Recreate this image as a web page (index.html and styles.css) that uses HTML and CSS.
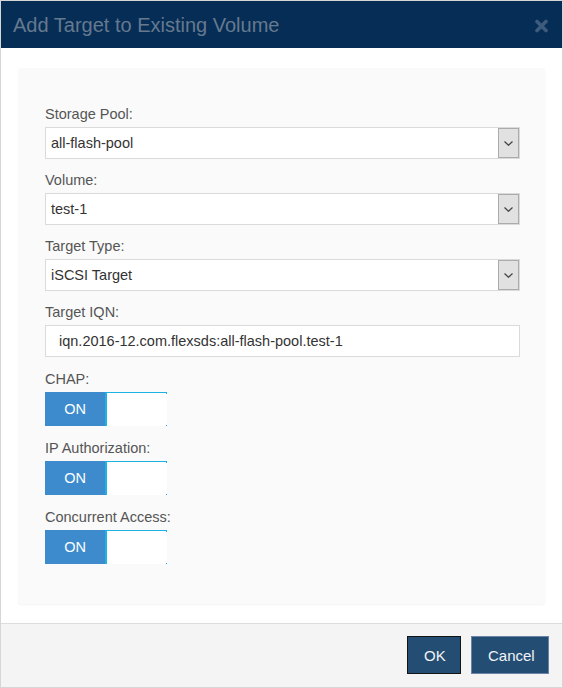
FILE: index.html
```html
<!DOCTYPE html>
<html>
<head>
<meta charset="utf-8">
<link rel="stylesheet" href="styles.css">
</head>
<body>
<div class="dialog">
  <div class="header">
    <div class="title">Add Target to Existing Volume</div>
    <svg class="close" width="13" height="14" viewBox="0 0 13 14"><path d="M2 2.5 L11 11.5 M11 2.5 L2 11.5" stroke="#3e5b7d" stroke-width="3.6" stroke-linecap="round"/></svg>
  </div>
  <div class="body">
    <div class="panel">
      <div class="field">
        <div class="label">Storage Pool:</div>
        <div class="select"><span class="value">all-flash-pool</span><span class="arrow"><svg width="9" height="5" viewBox="0 0 9 5"><path d="M0.5 0.5 L4.5 4.3 L8.5 0.5" fill="none" stroke="#444" stroke-width="1.2"/></svg></span></div>
      </div>
      <div class="field">
        <div class="label">Volume:</div>
        <div class="select"><span class="value">test-1</span><span class="arrow"><svg width="9" height="5" viewBox="0 0 9 5"><path d="M0.5 0.5 L4.5 4.3 L8.5 0.5" fill="none" stroke="#444" stroke-width="1.2"/></svg></span></div>
      </div>
      <div class="field">
        <div class="label">Target Type:</div>
        <div class="select"><span class="value">iSCSI Target</span><span class="arrow"><svg width="9" height="5" viewBox="0 0 9 5"><path d="M0.5 0.5 L4.5 4.3 L8.5 0.5" fill="none" stroke="#444" stroke-width="1.2"/></svg></span></div>
      </div>
      <div class="field">
        <div class="label">Target IQN:</div>
        <div class="input">iqn.2016-12.com.flexsds:all-flash-pool.test-1</div>
      </div>
      <div class="field toggle-field">
        <div class="label">CHAP:</div>
        <div class="switch"><span class="on">ON</span><span class="off"></span></div>
      </div>
      <div class="field toggle-field">
        <div class="label">IP Authorization:</div>
        <div class="switch"><span class="on">ON</span><span class="off"></span></div>
      </div>
      <div class="field toggle-field">
        <div class="label">Concurrent Access:</div>
        <div class="switch"><span class="on">ON</span><span class="off"></span></div>
      </div>
    </div>
  </div>
  <div class="footer">
    <button class="btn btn-ok">OK</button>
    <button class="btn btn-cancel">Cancel</button>
  </div>
</div>
</body>
</html>
```

FILE: styles.css
```css
html, body {
  margin: 0;
  padding: 0;
  background: #ffffff;
}
body {
  font-family: "Liberation Sans", Arial, sans-serif;
}
.dialog {
  width: 563px;
  height: 688px;
  box-sizing: border-box;
  border: 1px solid #d6d6d6;
  display: flex;
  flex-direction: column;
  background: #fff;
}
.header {
  height: 47px;
  background: #052d56;
  display: flex;
  align-items: center;
  justify-content: space-between;
  padding: 0 14px 0 12px;
  flex-shrink: 0;
}
.title {
  color: #66798e;
  font-size: 20px;
  line-height: 24px;
  margin-top: 1px;
}
.close {
  display: block;
  margin-top: 2px;
}
.body {
  padding: 20px 17px 19px 17px;
}
.panel {
  background: #fafafa;
  border-radius: 3px;
  box-shadow: 0 1px 2px rgba(0, 0, 0, 0.05);
  padding: 38px 24px 40px 27px;
  display: flex;
  flex-direction: column;
  gap: 13px;
}
.field {
  display: flex;
  flex-direction: column;
}
.toggle-field {
  margin-top: 1px;
}
.label {
  color: #555555;
  font-size: 14.5px;
  line-height: 17px;
  margin-bottom: 4px;
}
.select {
  height: 32px;
  box-sizing: border-box;
  border: 1px solid #dadada;
  background: #fff;
  display: flex;
  align-items: stretch;
  width: 475px;
}
.select .value {
  flex: 1;
  padding-left: 5px;
  font-size: 14.5px;
  color: #333;
  line-height: 30px;
}
.select .arrow {
  width: 21px;
  box-sizing: border-box;
  border: 1px solid #ababab;
  background: #e1e1e1;
  display: flex;
  align-items: center;
  justify-content: center;
  padding-top: 1px;
}
.select .arrow svg {
  display: block;
}
.input {
  height: 32px;
  box-sizing: border-box;
  width: 475px;
  border: 1px solid #dadada;
  background: #fff;
  padding-left: 13px;
  font-size: 14.5px;
  color: #333;
  line-height: 30px;
}
.switch {
  display: flex;
  width: 122px;
  height: 34px;
}
.switch .on {
  width: 60px;
  background: #3d8bcc;
  color: #fff;
  font-size: 14.5px;
  display: flex;
  align-items: center;
  justify-content: center;
}
.switch .off {
  flex: 1;
  background: #fff;
  border-top: 1px solid #1cb3e4;
  border-left: 2px solid #1cb3e4;
  position: relative;
}
.switch .off::before,
.switch .off::after {
  content: "";
  position: absolute;
  right: 0;
  width: 1px;
  height: 1px;
  background: #1cb3e4;
}
.switch .off::before {
  top: 0;
}
.switch .off::after {
  bottom: 0;
}
.footer {
  flex: 1;
  background: #f4f4f4;
  border-top: 1px solid #dcdcdc;
  display: flex;
  justify-content: flex-end;
  align-items: flex-start;
  gap: 10px;
  padding: 12px 13px 0 0;
}
.btn {
  height: 38px;
  padding: 0 16px;
  background: #244d73;
  color: #f0f4f8;
  font-family: "Liberation Sans", Arial, sans-serif;
  font-size: 15px;
  box-sizing: border-box;
  margin: 0;
}
.btn-ok {
  width: 54px;
  border: 1px solid #141414;
}
.btn-cancel {
  width: 78px;
  border: 1px solid #6b83a6;
}
```
